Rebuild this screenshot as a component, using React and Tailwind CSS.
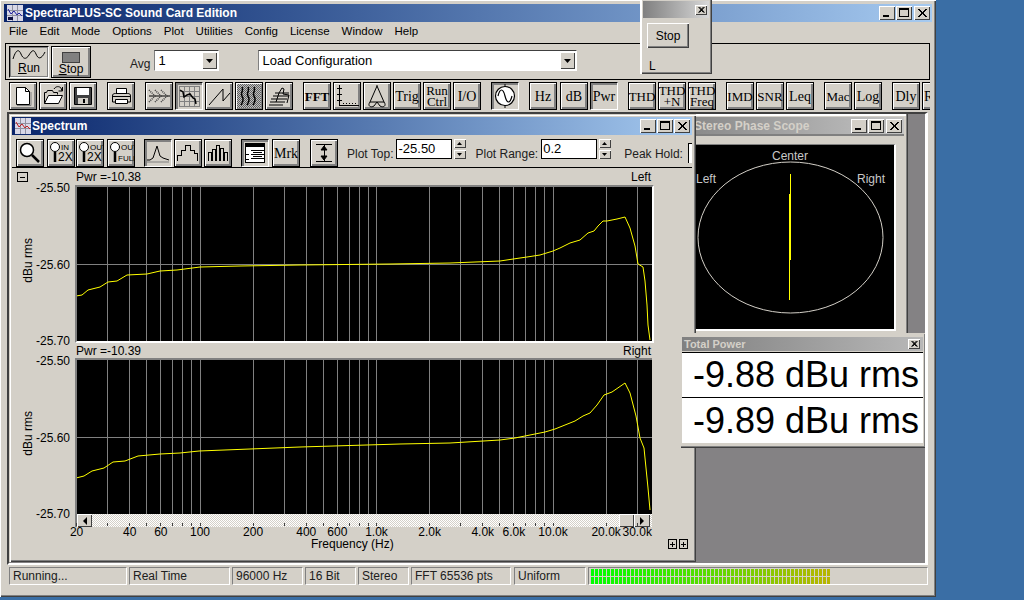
import React from "react";

const xOf = (f) => 553 + 176.5 * Math.log10(f / 10000);

const gridFreqs = [
    30, 40, 50, 60, 70, 80, 90, 100, 200, 300, 400, 500, 600, 700, 800, 900, 1000, 2000, 3000, 4000, 5000, 6000, 7000,
    8000, 9000, 10000, 20000, 30000,
];

const xLabels = [
    [20, "20"],
    [40, "40"],
    [60, "60"],
    [100, "100"],
    [200, "200"],
    [400, "400"],
    [600, "600"],
    [1000, "1.0k"],
    [2000, "2.0k"],
    [4000, "4.0k"],
    [6000, "6.0k"],
    [10000, "10.0k"],
    [20000, "20.0k"],
    [30000, "30.0k"],
];

const leftCurve =
    "76,298 82,297 88,292 100,289 108,284 117,283 127,277 147,276 160,273 177,272 200,269 240,268 300,267 390,266 450,265 500,263 520,260 527,259 540,257 553,253 560,250 570,245 580,242 588,235 594,233 598,228 603,223 607,223 617,221 625,219 630,230 635,248 638,266 643,269 645,283 647,307 648,327 650,342";
const rightCurve =
    "76,480 84,478 92,473 104,470 113,464 125,463 138,458 160,456 180,455 199,453 250,451 300,449 400,446 450,445 500,442 515,440 530,437 545,434 555,431 565,427 575,423 583,418 590,415 597,407 604,397 612,394 625,385 630,395 636,418 640,440 644,450 646,470 648,490 650,512";

const raised = "border border-black shadow-[inset_1px_1px_0_#fff,inset_-2px_-2px_0_#808080]";
const pressedFace = "border border-black border-b-white border-r-white shadow-[inset_2px_2px_0_#808080]";
const smallRaised = "bg-[#d4d0c8] shadow-[inset_1px_1px_0_#fff,inset_-1px_-1px_0_#404040]";
const sunken = "border border-t-[#808080] border-l-[#808080] border-b-white border-r-white";

const ToolBtn = ({ pressed, className = "", children }) => (
    <div
        className={`flex h-[28px] w-[28px] shrink-0 items-center justify-center overflow-hidden bg-[#d4d0c8] font-['Liberation_Serif',serif] text-[13px] leading-[11px] text-black ${pressed ? pressedFace : raised} ${className}`}
    >
        {children}
    </div>
);

const Icon = ({ children }) => (
    <svg width="26" height="26" viewBox="0 0 26 26" fill="none" stroke="#000" strokeWidth="1">
        {children}
    </svg>
);

const CapBtn = ({ type, className = "" }) => (
    <div className={`h-[14px] w-[16px] shrink-0 ${smallRaised} ${className}`}>
        <svg width="16" height="14" viewBox="0 0 16 14" fill="none" stroke="#000" shapeRendering="crispEdges">
            {type === "min" && <rect x="4" y="9" width="6" height="2" fill="#000" stroke="none" />}
            {type === "max" && <path d="M3.5 2.5h9v8h-9zM3.5 3.5h9" />}
            {type === "close" && (
                <path d="M4 3l8 8M5 3l8 8M12 3l-8 8M13 3l-8 8" shapeRendering="auto" strokeWidth="1" />
            )}
        </svg>
    </div>
);

const SmallClose = ({ className = "" }) => (
    <div className={`h-[10px] w-[12px] shrink-0 ${smallRaised} ${className}`}>
        <svg width="12" height="10" viewBox="0 0 12 10" fill="none" stroke="#000">
            <path d="M3.5 2l5 5.5M4.5 2l5 5.5M8.5 2l-5 5.5M9.5 2l-5 5.5" />
        </svg>
    </div>
);

const AppIcon = ({ small }) => (
    <svg width="16" height="16" viewBox="0 0 16 16" className="shrink-0" shapeRendering="crispEdges">
        <rect width="16" height="16" fill="#d8d8e8" />
        <path d="M0 5h16M0 10h16M5 0v16M10 0v16" stroke="#9090a0" />
        <path d="M1 4l3 5 3-3 3 4 2-2 3 3" stroke={small ? "#c02020" : "#2020a0"} fill="none" shapeRendering="auto" />
        {!small && <path d="M1 12h5v3H1z" fill="#101040" />}
    </svg>
);

const SpinBox = ({ className = "" }) => (
    <div className={`flex h-[20px] w-[12px] shrink-0 flex-col justify-between ${className}`}>
        {["M3 6h5L5.5 3z", "M3 3h5L5.5 6z"].map((d) => (
            <div key={d} className={`h-[9px] w-[12px] ${smallRaised}`}>
                <svg width="12" height="9" viewBox="0 0 12 9">
                    <path d={d} fill="#000" />
                </svg>
            </div>
        ))}
    </div>
);

const Field = ({ value, className = "" }) => (
    <div
        className={`flex h-[20px] shrink-0 items-center border border-black bg-white pl-[1px] text-[13px] text-black ${className}`}
    >
        {value}
    </div>
);

const Combo = ({ value, className = "" }) => (
    <div
        className={`flex h-[21px] shrink-0 items-center border border-t-[#404040] border-l-[#808080] border-b-white border-r-white bg-white pl-[3px] pr-[1px] text-[13px] ${className}`}
    >
        <span className="flex-1">{value}</span>
        <div className={`h-[17px] w-[15px] ${smallRaised}`}>
            <svg width="15" height="17" viewBox="0 0 15 17">
                <path d="M4 7h7l-3.5 4z" fill="#000" />
            </svg>
        </div>
    </div>
);

const Plot = ({ y, curve, gridY }) => (
    <svg width="575" height="154" viewBox={`77 ${y} 575 154`} className="block bg-black">
        <g stroke="#808080" shapeRendering="crispEdges">
            {gridFreqs.map((f) => (
                <line key={f} x1={Math.floor(xOf(f)) + 0.5} x2={Math.floor(xOf(f)) + 0.5} y1={y} y2={y + 154} />
            ))}
            <line x1="77" x2="652" y1={gridY} y2={gridY} />
        </g>
        <polyline points={curve} fill="none" stroke="#ffff00" strokeWidth="1" />
    </svg>
);

const AxisValues = ({ values, className = "" }) => (
    <div className={`relative flex h-[167px] w-[63px] shrink-0 flex-col justify-between text-right ${className}`}>
        {values.map((v) => (
            <span key={v} className="pr-[5px] text-[12px] leading-[14px] text-black">
                {v}
            </span>
        ))}
        <span className="absolute left-[9px] top-[57px] text-[12px] leading-[14px] text-black [writing-mode:vertical-rl] rotate-180">
            dBu rms
        </span>
    </div>
);

const PaneHeader = ({ left, right, className = "", children }) => (
    <div className={`relative flex items-center justify-between pl-[64px] pr-[41px] text-[12px] text-black ${className}`}>
        {children}
        <span>{left}</span>
        <span>{right}</span>
    </div>
);

const SpectrumWindow = () => (
    <div className="absolute left-0 top-0 z-10 flex h-[448px] w-[687px] flex-col bg-[#d4d0c8] pb-[3px] pl-[3px] pr-[4px] pt-[3px] shadow-[inset_1px_1px_0_#d4d0c8,inset_2px_2px_0_#fff,inset_-1px_-1px_0_#404040,inset_-2px_-2px_0_#808080]">
        <div className="flex h-[18px] shrink-0 items-center bg-gradient-to-r from-[#0a246a] to-[#a6caf0] pl-[3px] pr-[2px] font-bold text-white">
            <AppIcon small />
            <span className="ml-[1px] text-[12px]">Spectrum</span>
            <CapBtn type="min" className="ml-auto" />
            <CapBtn type="max" className="ml-[1px]" />
            <CapBtn type="close" className="ml-[1px]" />
        </div>
        <div className="flex h-[33px] shrink-0 items-start border-b border-black pl-[4px] pt-[4px] text-[12px] text-[#202020]">
            <ToolBtn>
                <Icon>
                    <circle cx="10" cy="10" r="6.5" fill="#fff" strokeWidth="1.5" />
                    <path d="M15 15l7 7" strokeWidth="2.5" />
                </Icon>
            </ToolBtn>
            <ZoomBtn top="IN" bottom="2X" className="ml-[3px]" />
            <ZoomBtn top="OUT" bottom="2X" className="ml-[1px]" />
            <ZoomBtn top="OUT" bottom="FULL" className="ml-[3px]" />
            <ToolBtn pressed className="ml-[9px]">
                <Icon>
                    <path d="M2 20h3l3-2 4-12 3 10 3 2 6 2" />
                    <path d="M2 22h22" stroke="#808080" />
                </Icon>
            </ToolBtn>
            <ToolBtn className="ml-[2px]">
                <Icon>
                    <path d="M2 21v-6h4v-5h4V5h5v5h4v3h3v8" shapeRendering="crispEdges" />
                </Icon>
            </ToolBtn>
            <ToolBtn className="ml-[2px]">
                <Icon>
                    <path
                        d="M3.5 21v-9h3v9M7.5 21V9h3v12M11.5 21V5h3v16M15.5 21V8h3v13M19.5 21v-9h3v9"
                        shapeRendering="crispEdges"
                    />
                </Icon>
            </ToolBtn>
            <ToolBtn pressed className="ml-[9px]">
                <Icon>
                    <g shapeRendering="crispEdges">
                        <rect x="3.5" y="3.5" width="19" height="19" fill="#fff" />
                        <rect x="4" y="4" width="18" height="3" fill="#000" stroke="none" />
                        <path d="M8.5 10.5h13M8.5 14.5h13M8.5 18.5h13M11 12.5h9M11 16.5h9" />
                        <path d="M4 14h3M4 19h3" />
                    </g>
                </Icon>
            </ToolBtn>
            <ToolBtn className="ml-[3px] text-[14px]">Mrk</ToolBtn>
            <ToolBtn className="ml-[10px]">
                <Icon>
                    <path d="M5 4.5h16M5 21.5h16M13 5v16" shapeRendering="crispEdges" />
                    <path d="M13 6l-3 4h6zM13 20l-3-4h6z" fill="#000" />
                </Icon>
            </ToolBtn>
            <span className="ml-[9px] mt-[6px]">Plot Top:</span>
            <Field value="-25.50" className="ml-[3px] w-[56px]" />
            <SpinBox className="ml-[2px]" />
            <span className="ml-[9px] mt-[6px]">Plot Range:</span>
            <Field value="0.2" className="ml-[3px] w-[56px]" />
            <SpinBox className="ml-[2px]" />
            <span className="ml-[13px] mt-[6px]">Peak Hold:</span>
            <div className="ml-[5px] mt-[4px] h-[20px] flex-1 border border-b-0 border-r-0 border-black bg-white" />
        </div>
        <PaneHeader left="Pwr =-10.38" right="Left" className="h-[17px]">
            <div className="absolute left-[5px] top-[4px] flex h-[10px] w-[11px] items-center justify-center border border-black bg-[#d4d0c8]">
                <div className="h-px w-[5px] bg-black" />
            </div>
        </PaneHeader>
        <div className="flex items-start">
            <AxisValues values={["-25.50", "-25.60", "-25.70"]} className="-mb-[5px] -mt-[4px]" />
            <div className="border-2 border-[#808080] border-b-white border-r-white">
                <Plot y={189} curve={leftCurve} gridY={266.5} />
            </div>
        </div>
        <PaneHeader left="Pwr =-10.39" right="Right" className="h-[15px]" />
        <div className="flex items-start">
            <AxisValues values={["-25.50", "-25.60", "-25.70"]} className="-mt-[4px]" />
            <div className="-mb-[4px] border-l-2 border-t-2 border-[#808080]">
                <Plot y={362} curve={rightCurve} gridY={439.5} />
                <div className="flex h-[13px] w-[575px] bg-[repeating-conic-gradient(#d4d0c8_0_25%,#fff_0_50%)] bg-[length:2px_2px]">
                    <div className={`flex h-[13px] w-[15px] items-center justify-center ${smallRaised}`}>
                        <svg width="6" height="8" viewBox="0 0 6 8">
                            <path d="M5 0v8L1 4z" fill="#000" />
                        </svg>
                    </div>
                    <div className={`ml-auto h-[13px] w-[15px] ${smallRaised}`} />
                    <div className={`flex h-[13px] w-[16px] items-center justify-center ${smallRaised}`}>
                        <svg width="6" height="8" viewBox="0 0 6 8">
                            <path d="M1 0v8l4-4z" fill="#000" />
                        </svg>
                    </div>
                    <div className="w-[2px]" />
                </div>
            </div>
        </div>
        <svg width="680" height="3" viewBox="12 529 680 3" className="block shrink-0">
            <g stroke="#404040" shapeRendering="crispEdges">
                {[20, ...gridFreqs].map((f) => (
                    <line key={f} x1={Math.floor(xOf(f)) + 0.5} x2={Math.floor(xOf(f)) + 0.5} y1="529" y2="532" />
                ))}
            </g>
        </svg>
        <div className="relative -mt-px h-[14px] shrink-0">
            {xLabels.map(([f, label]) => (
                <span
                    key={label}
                    className="absolute top-0 -translate-x-1/2 text-[12px] leading-[14px] text-black"
                    style={{ left: xOf(f) - 12 }}
                >
                    {label}
                </span>
            ))}
        </div>
        <div className="-mt-[2px] flex h-[14px] shrink-0 items-center pl-[299px] pr-[4px] text-[12px] text-black">
            <span>Frequency (Hz)</span>
            <div className="ml-auto flex gap-[2px]">
                <PlusBtn />
                <PlusBtn />
            </div>
        </div>
    </div>
);

const PlusBtn = () => (
    <div className="flex h-[10px] w-[9px] items-center justify-center border border-black bg-[#d4d0c8]">
        <svg width="7" height="8" viewBox="0 0 7 8" shapeRendering="crispEdges">
            <path d="M1 4h5M3.5 1.5v5" stroke="#000" />
        </svg>
    </div>
);

const ZoomBtn = ({ top, bottom, className = "" }) => (
    <ToolBtn className={className}>
        <svg width="26" height="26" viewBox="0 0 26 26" fill="none" stroke="#000">
            <circle cx="7" cy="7" r="4.5" fill="#fff" />
            <path d="M7 12v10" strokeWidth="2.5" />
            <text x="13" y="10" fontSize="8" fontFamily="Liberation Sans" fill="#000" stroke="none">
                {top}
            </text>
            <text x="10" y="21" fontSize={bottom === "FULL" ? 8 : 12} fontFamily="Liberation Sans" fill="#000" stroke="none">
                {bottom}
            </text>
        </svg>
    </ToolBtn>
);

const ScopeWindow = () => (
    <div className="absolute left-[641px] top-0 flex h-[230px] w-[258px] flex-col bg-[#d4d0c8] pl-[4px] pr-[4px] pt-[3px] shadow-[inset_-1px_-1px_0_#404040,inset_-2px_-2px_0_#808080,inset_0_2px_0_#fff]">
        <div className="flex h-[17px] shrink-0 items-center bg-gradient-to-r from-[#808080] to-[#c4c4c4] pl-[40px] pr-[2px] text-[12px] font-bold text-[#d4d0c8]">
            <span>Stereo Phase Scope</span>
            <CapBtn type="min" className="ml-auto" />
            <CapBtn type="max" className="ml-[1px]" />
            <CapBtn type="close" className="ml-[2px]" />
        </div>
        <div className="h-[10px] shrink-0 border-t-2 border-[#808080]" />
        <div className="relative h-[187px] w-[242px] border-b-2 border-r-2 border-t border-[#d4d0c8] border-b-white border-r-white border-t-[#808080] bg-black text-[12px] text-[#c8c8c8]">
            <svg width="240" height="185" viewBox="654 148 240 185" className="block">
                <ellipse cx="790.5" cy="240.5" rx="92.5" ry="75.5" fill="none" stroke="#d4d0c8" strokeWidth="1" />
                <path d="M790.5 177v66" stroke="#ffff00" fill="none" />
                <path d="M789.5 262v41" stroke="#ffff00" fill="none" />
                <rect x="789" y="197" width="2" height="66" fill="#ffff00" />
            </svg>
            <span className="absolute left-[118px] top-[2px]">Center</span>
            <span className="absolute left-[42px] top-[25px]">Left</span>
            <span className="absolute left-[203px] top-[25px]">Right</span>
        </div>
    </div>
);

const PowerReadout = ({ value, className = "" }) => (
    <div className={`flex h-[45px] items-center justify-end pr-[4px] text-[36px] leading-none text-black ${className}`}>
        {value}
    </div>
);

const TotalPowerWindow = () => (
    <div className="absolute left-[671px] top-[219px] z-20 flex h-[115px] w-[246px] flex-col bg-[#d4d0c8] pl-[2px] pr-[3px] pt-[4px] shadow-[inset_0_1px_0_#d4d0c8,inset_1px_1px_0_#d4d0c8,inset_-1px_-1px_0_#404040,inset_-2px_-2px_0_#808080]">
        <div className="flex h-[14px] shrink-0 items-center bg-gradient-to-r from-[#808080] to-[#b8b8b8] pl-[2px] pr-[3px] text-[11px] font-bold text-[#d4d0c8]">
            <span>Total Power</span>
            <SmallClose className="ml-auto" />
        </div>
        <div className="mt-px border-t border-black bg-white">
            <PowerReadout value="-9.88 dBu rms" className="border-b border-black" />
            <PowerReadout value="-9.89 dBu rms" />
        </div>
    </div>
);

const StopWindow = () => (
    <div className="absolute left-[640px] top-0 z-30 h-[74px] w-[72px] bg-[#d4d0c8] shadow-[inset_2px_0_0_#fff,inset_-1px_-1px_0_#404040,inset_-2px_-2px_0_#808080] pl-[3px] pr-[3px] pt-[1px]">
        <div className="flex h-[17px] items-center justify-end bg-gradient-to-r from-[#808080] to-[#d8d8d8] pr-[2px]">
            <SmallClose />
        </div>
        <div className="ml-[4px] mt-[5px] flex h-[25px] w-[42px] items-center justify-center text-[12px] text-black shadow-[inset_1px_1px_0_#fff,inset_-1px_-1px_0_#404040,inset_-2px_-2px_0_#808080]">
            Stop
        </div>
        <div className="ml-[6px] mt-[11px] text-[12px] leading-[14px] text-black">L</div>
    </div>
);

const StatusCell = ({ children, className = "" }) => (
    <div className={`flex h-[18px] shrink-0 items-center pl-[3px] text-[12px] text-[#202020] ${sunken} ${className}`}>
        {children}
    </div>
);

const Meter = () => (
    <div className={`flex h-[18px] flex-1 flex-col gap-px pl-[2px] pt-[1px] ${sunken}`}>
        {[0, 1].map((row) => (
            <div key={row} className="flex h-[7px] gap-px">
                {Array.from({ length: 60 }, (_, i) => (
                    <div
                        key={i}
                        className="h-[7px] w-[3px]"
                        style={{ backgroundColor: `rgb(${Math.round(i * 3.1)}, ${255 - Math.round(i * 1.25)}, 0)` }}
                    />
                ))}
            </div>
        ))}
    </div>
);

const App = () => {
    return (
        <div className="relative h-[600px] w-[1024px] overflow-hidden bg-[#3a6ea5] font-['Liberation_Sans',Arial,sans-serif]">
            <div className="absolute left-0 top-0 flex h-[597px] w-[936px] flex-col bg-[#d4d0c8] px-[4px] pb-[4px] pt-[4px] shadow-[inset_1px_1px_0_#fff,inset_-1px_-1px_0_#404040,inset_-2px_-2px_0_#808080]">
                <div className="flex h-[18px] shrink-0 items-center bg-gradient-to-r from-[#0a246a] to-[#a6caf0] pl-[3px] pr-[2px] text-white">
                    <AppIcon />
                    <span className="ml-[2px] text-[12px] font-bold">SpectraPLUS-SC Sound Card Edition</span>
                    <CapBtn type="min" className="ml-auto" />
                    <CapBtn type="max" className="ml-[1px]" />
                    <CapBtn type="close" className="ml-[2px]" />
                </div>
                <div className="flex h-[20px] shrink-0 items-center gap-3 pl-[5px] text-[11.5px] text-black">
                    {["File", "Edit", "Mode", "Options", "Plot", "Utilities", "Config", "License", "Window", "Help"].map(
                        (m) => (
                            <span key={m}>{m}</span>
                        ),
                    )}
                </div>

                <div className="ml-px mr-[2px] mt-px flex h-[37px] shrink-0 items-start border border-black pl-[3px] pt-[2px]">
                    <div className="flex h-[32px] w-[40px] flex-col items-center border border-black border-b-white border-r-white pt-[1px] text-[12px] leading-[12px] text-black shadow-[inset_1px_1px_0_#808080,inset_-1px_-1px_0_#808080]">
                        <svg width="34" height="14" viewBox="0 0 34 14" fill="none" stroke="#000">
                            <path d="M1 11C4 1 7 1 9 6s5 6 8 1 5-6 7-1 5 6 9-2" />
                        </svg>
                        <span>
                            <u>R</u>un
                        </span>
                    </div>
                    <div className="ml-[2px] flex h-[32px] w-[40px] flex-col items-center border border-black pt-[5px] text-[12px] leading-[12px] text-black shadow-[inset_1px_1px_0_#fff,inset_-2px_-2px_0_#808080]">
                        <div className="h-[11px] w-[18px] border border-[#404040] bg-[#808080]" />
                        <span>
                            <u>S</u>top
                        </span>
                    </div>
                    <span className="ml-[39px] mt-[9px] text-[12px] text-[#202020]">Avg</span>
                    <Combo value="1" className="ml-[4px] mt-[4px] w-[65px]" />
                    <Combo value="Load Configuration" className="ml-[39px] mt-[4px] w-[319px]" />
                </div>

                <div className="ml-px mr-[2px] flex h-[32px] shrink-0 items-start overflow-hidden pl-[4px] pt-[2px]">
                    <ToolBtn>
                        <Icon>
                            <path d="M6.5 4.5h9l4 4v13h-13z" fill="#fff" />
                            <path d="M15.5 4.5v4h4" />
                            <path d="M7 22.5h14V9" stroke="#808080" />
                        </Icon>
                    </ToolBtn>
                    <ToolBtn className="ml-[2px]">
                        <Icon>
                            <path d="M4.5 20.5v-11h2l1-2h5l1 2h4v2" fill="#d4d0c8" />
                            <path d="M4.5 20.5l4-8h14l-4 8z" fill="#fff" />
                            <path d="M14 6c2-3 5-3 7-1l1 3M22.5 4v4h-4" />
                        </Icon>
                    </ToolBtn>
                    <ToolBtn className="ml-[2px]">
                        <Icon>
                            <path d="M4.5 4.5h17v17h-17z" fill="#404040" />
                            <rect x="7" y="5" width="12" height="7" fill="#fff" stroke="none" />
                            <rect x="8" y="15" width="10" height="6" fill="#d4d0c8" stroke="none" />
                            <rect x="13" y="16" width="2" height="4" fill="#000" stroke="none" />
                        </Icon>
                    </ToolBtn>
                    <ToolBtn className="ml-[10px]">
                        <Icon>
                            <path d="M8.5 5.5h10v6h-10z" fill="#fff" />
                            <path d="M4.5 13c0-2 1-2.500 3-2.500h12c2 0 3 .500 3 2.500v6h-18z" fill="#d4d0c8" />
                            <path d="M7.500 16.500h12v4h-12zM5 13.500h17" fill="#fff" />
                        </Icon>
                    </ToolBtn>
                    <ToolBtn className="ml-[10px]">
                        <Icon>
                            <path d="M3 13h21" />
                            <path d="M3 7l6 6-6 6M9 7l6 6-6 6M15 7l6 6-6 6" stroke="#404040" strokeDasharray="1 1" strokeWidth="1.5" />
                        </Icon>
                    </ToolBtn>
                    <ToolBtn pressed className="ml-[2px]">
                        <Icon>
                            <path
                                d="M3.5 3.500h20v20h-20zM3.500 8.500h20M3.500 13.500h20M3.500 18.500h20M8.500 3.500v20M13.500 3.500v20M18.500 3.500v20"
                                stroke="#808080"
                                shapeRendering="crispEdges"
                            />
                            <path d="M4 7l3 2 1 5 3-2 3-1 3 4 2 1 1 5" strokeWidth="1.5" />
                        </Icon>
                    </ToolBtn>
                    <ToolBtn className="ml-[2px]">
                        <Icon>
                            <path d="M3 22L17 6v12l7-8" />
                        </Icon>
                    </ToolBtn>
                    <ToolBtn className="ml-[2px]">
                        <div className="flex h-[24px] w-[24px] items-center justify-center bg-[repeating-conic-gradient(#606060_0_25%,#c0c0c0_0_50%)] bg-[length:2px_2px]">
                            <svg width="20" height="22" viewBox="0 0 20 22" fill="none" stroke="#000" strokeWidth="1.5">
                                <path d="M3 2c2 4-2 6 0 9s1 6-1 9M9 2c2 4-2 6 0 9s1 6-1 9M15 2c2 4-2 6 0 9s1 6-1 9" />
                            </svg>
                        </div>
                    </ToolBtn>
                    <ToolBtn className="ml-[2px]">
                        <Icon>
                            <path d="M3 22h14M4 19h15M5 16h16M7 13h16M9 10h14" />
                            <path d="M10 19l3-9 3-5 2 1-1 5 6 1-2 8" />
                        </Icon>
                    </ToolBtn>
                    <ToolBtn className="ml-[10px] font-bold">FFT</ToolBtn>
                    <ToolBtn className="ml-[2px]">
                        <Icon>
                            <path d="M5.500 2v20.500h19" shapeRendering="crispEdges" />
                            <path d="M3 5.500h5M3 11.500h5M3 17.500h5" shapeRendering="crispEdges" />
                            <path d="M9 20.500h14" strokeDasharray="1 2" />
                        </Icon>
                    </ToolBtn>
                    <ToolBtn className="ml-[2px]">
                        <Icon>
                            <path d="M13 3L6 19h14z" />
                            <path d="M13 3v-1M6 19c-3 4 1 6 4 4l3-4 3 4c3 2 7 0 4-4" />
                        </Icon>
                    </ToolBtn>
                    <ToolBtn className="ml-[2px] text-[14px]">Trig</ToolBtn>
                    <ToolBtn className="ml-[2px] flex-col text-[12px]">
                        <span>Run</span>
                        <span>Ctrl</span>
                    </ToolBtn>
                    <ToolBtn className="ml-[2px] text-[14px]">I/O</ToolBtn>
                    <ToolBtn pressed className="ml-[10px]">
                        <Icon>
                            <circle cx="13" cy="13" r="9.500" fill="#fff" strokeWidth="1.2" />
                            <path d="M13 1v3M13 22v3" />
                            <path d="M6 13c2-8 5-8 7 0s5 8 7 0" strokeWidth="1.2" />
                        </Icon>
                    </ToolBtn>
                    <ToolBtn className="ml-[10px] text-[14px]">Hz</ToolBtn>
                    <ToolBtn className="ml-[3px] text-[14px]">dB</ToolBtn>
                    <ToolBtn pressed className="ml-[2px] text-[14px]">Pwr</ToolBtn>
                    <ToolBtn className="ml-[10px] text-[13px]">THD</ToolBtn>
                    <ToolBtn className="ml-[2px] flex-col text-[12px]">
                        <span>THD</span>
                        <span>+N</span>
                    </ToolBtn>
                    <ToolBtn className="ml-[2px] flex-col text-[12px]">
                        <span>THD</span>
                        <span>Freq</span>
                    </ToolBtn>
                    <ToolBtn className="ml-[10px]">IMD</ToolBtn>
                    <ToolBtn className="ml-[2px]">SNR</ToolBtn>
                    <ToolBtn className="ml-[2px] text-[14px]">Leq</ToolBtn>
                    <ToolBtn className="ml-[10px]">Mac</ToolBtn>
                    <ToolBtn className="ml-[2px] text-[14px]">Log</ToolBtn>
                    <ToolBtn className="ml-[10px] text-[14px]">Dly</ToolBtn>
                    <ToolBtn className="ml-[2px] justify-start pl-[1px] text-[14px]">Rec</ToolBtn>
                </div>

                <div className="relative ml-[3px] mr-[1px] h-[453px] w-[921px] shrink-0 overflow-hidden border-b-2 border-l-2 border-r-[3px] border-t-2 border-[#404040] border-b-white border-r-white bg-[#848284]">
                    <ScopeWindow />
                    <SpectrumWindow />
                    <TotalPowerWindow />
                </div>

                <div className="flex flex-1 items-start gap-[2px] pl-[5px] pr-[4px] pt-[2px]">
                    <StatusCell className="w-[118px]">Running...</StatusCell>
                    <StatusCell className="w-[101px]">Real Time</StatusCell>
                    <StatusCell className="w-[71px]">96000 Hz</StatusCell>
                    <StatusCell className="w-[51px]">16 Bit</StatusCell>
                    <StatusCell className="w-[51px]">Stereo</StatusCell>
                    <StatusCell className="w-[100px]">FFT 65536 pts</StatusCell>
                    <StatusCell className="ml-[1px] w-[72px]">Uniform</StatusCell>
                    <Meter />
                </div>
            </div>
            <StopWindow />
        </div>
    );
};

export default App;
